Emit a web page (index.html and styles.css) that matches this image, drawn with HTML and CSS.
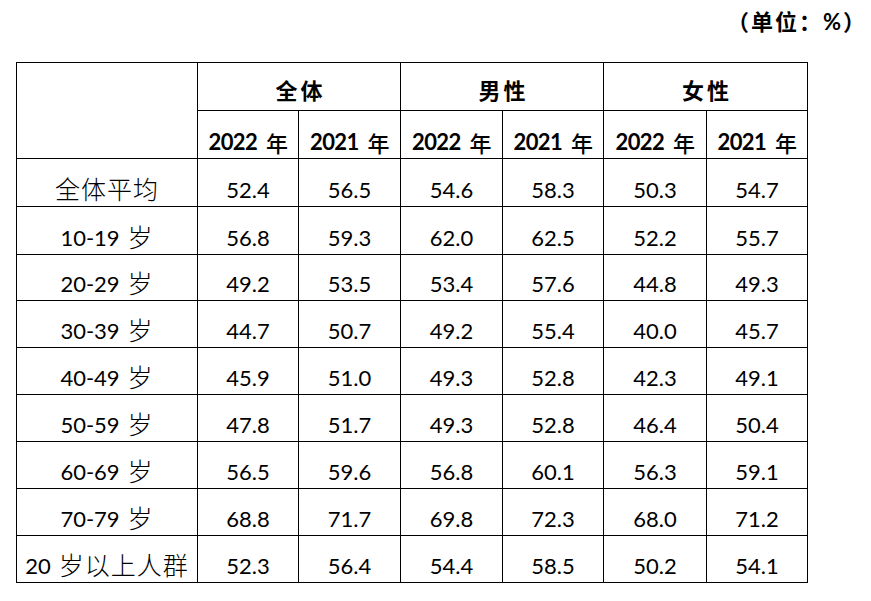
FILE: index.html
```html
<!DOCTYPE html>
<html lang="zh-CN">
<head>
<meta charset="utf-8">
<title>单位</title>
<link rel="stylesheet" href="styles.css">
</head>
<body>
<div class="page">
  <div class="unit">（单位：<span class="pct">%</span>）</div>
  <div class="grid">
    <div class="cell corner"></div>
    <div class="cell group">全体</div>
    <div class="cell group">男性</div>
    <div class="cell group">女性</div>

    <div class="cell year">2022 <span class="nian">年</span></div>
    <div class="cell year">2021 <span class="nian">年</span></div>
    <div class="cell year">2022 <span class="nian">年</span></div>
    <div class="cell year">2021 <span class="nian">年</span></div>
    <div class="cell year">2022 <span class="nian">年</span></div>
    <div class="cell year">2021 <span class="nian">年</span></div>

    <div class="cell label"><span class="cjk first">全体平均</span></div>
    <div class="cell num">52.4</div><div class="cell num">56.5</div><div class="cell num">54.6</div><div class="cell num">58.3</div><div class="cell num">50.3</div><div class="cell num">54.7</div>

    <div class="cell label">10-19 <span class="cjk">岁</span></div>
    <div class="cell num">56.8</div><div class="cell num">59.3</div><div class="cell num">62.0</div><div class="cell num">62.5</div><div class="cell num">52.2</div><div class="cell num">55.7</div>

    <div class="cell label">20-29 <span class="cjk">岁</span></div>
    <div class="cell num">49.2</div><div class="cell num">53.5</div><div class="cell num">53.4</div><div class="cell num">57.6</div><div class="cell num">44.8</div><div class="cell num">49.3</div>

    <div class="cell label">30-39 <span class="cjk">岁</span></div>
    <div class="cell num">44.7</div><div class="cell num">50.7</div><div class="cell num">49.2</div><div class="cell num">55.4</div><div class="cell num">40.0</div><div class="cell num">45.7</div>

    <div class="cell label">40-49 <span class="cjk">岁</span></div>
    <div class="cell num">45.9</div><div class="cell num">51.0</div><div class="cell num">49.3</div><div class="cell num">52.8</div><div class="cell num">42.3</div><div class="cell num">49.1</div>

    <div class="cell label">50-59 <span class="cjk">岁</span></div>
    <div class="cell num">47.8</div><div class="cell num">51.7</div><div class="cell num">49.3</div><div class="cell num">52.8</div><div class="cell num">46.4</div><div class="cell num">50.4</div>

    <div class="cell label">60-69 <span class="cjk">岁</span></div>
    <div class="cell num">56.5</div><div class="cell num">59.6</div><div class="cell num">56.8</div><div class="cell num">60.1</div><div class="cell num">56.3</div><div class="cell num">59.1</div>

    <div class="cell label">70-79 <span class="cjk">岁</span></div>
    <div class="cell num">68.8</div><div class="cell num">71.7</div><div class="cell num">69.8</div><div class="cell num">72.3</div><div class="cell num">68.0</div><div class="cell num">71.2</div>

    <div class="cell label">20 <span class="cjk">岁以上人群</span></div>
    <div class="cell num">52.3</div><div class="cell num">56.4</div><div class="cell num">54.4</div><div class="cell num">58.5</div><div class="cell num">50.2</div><div class="cell num">54.1</div>
  </div>
</div>
</body>
</html>
```

FILE: styles.css
```css
html, body {
  margin: 0;
  padding: 0;
  background: #ffffff;
}

.page {
  width: 871px;
  height: 601px;
  font-family: Lato, "Noto Sans CJK SC", sans-serif;
  color: #000;
}

.unit {
  height: 40px;
  line-height: 40px;
  text-align: right;
  padding-right: 4px;
  font-family: "Noto Sans CJK SC", sans-serif;
  font-weight: 700;
  font-size: 22px;
  letter-spacing: 2px;
}

.unit .pct {
  font-family: Lato, sans-serif;
  font-weight: 700;
  font-size: 22px;
}

.grid {
  margin: 22px 0 0 16px;
  width: 790px;
  display: grid;
  grid-template-columns: 180px 100px 101px 101px 100px 102px 100px;
  grid-template-rows: 47px 47px 47px 47px 45px 46px 46px 46px 46px 46px 46px;
  gap: 1px;
  padding: 1px;
  background: #000;
}

.cell {
  background: #fff;
  display: flex;
  justify-content: center;
  align-items: flex-end;
  line-height: 1;
  white-space: nowrap;
}

.corner {
  grid-row: span 2;
}

.group {
  grid-column: span 2;
  font-family: "Noto Sans CJK SC", sans-serif;
  font-weight: 700;
  font-size: 22px;
  letter-spacing: 3px;
  padding-bottom: 10px;
  padding-left: 3px;
}

.year {
  font-weight: 700;
  font-size: 22px;
  letter-spacing: -0.6px;
  padding-bottom: 5px;
}

.year .nian {
  font-family: "Noto Sans CJK SC", sans-serif;
  font-weight: 500;
  font-size: 22px;
  margin-left: 9px;
}

.num {
  font-size: 22px;
  padding-bottom: 5px;
}

.label {
  font-size: 22px;
  padding-bottom: 5px;
}

.label .cjk {
  font-family: "Noto Sans CJK SC", sans-serif;
  font-weight: 300;
  font-size: 25px;
  letter-spacing: 1px;
  margin-left: 8px;
}

.label .cjk.first {
  margin-left: 0;
}
```
